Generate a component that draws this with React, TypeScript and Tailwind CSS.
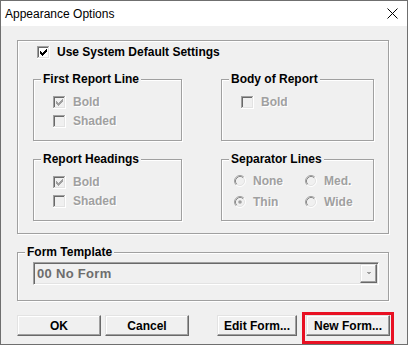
import React from "react";

const CHECK: [number, number, number][] = [
  [9, 3, 1],
  [8, 4, 2],
  [3, 5, 1],
  [7, 5, 3],
  [3, 6, 2],
  [6, 6, 3],
  [3, 7, 5],
  [4, 8, 3],
  [5, 9, 1],
];

function CheckBox({ checked, disabled }: { checked?: boolean; disabled?: boolean }) {
  const fill = disabled ? "#f0f0f0" : "#ffffff";
  const mark = disabled ? "#a0a0a0" : "#000000";
  return (
    <svg width="13" height="13" viewBox="0 0 13 13" shapeRendering="crispEdges" className="block shrink-0">
      <rect x="0" y="0" width="12" height="1" fill="#a0a0a0" />
      <rect x="0" y="0" width="1" height="12" fill="#a0a0a0" />
      <rect x="1" y="1" width="10" height="1" fill="#696969" />
      <rect x="1" y="1" width="1" height="10" fill="#696969" />
      <rect x="1" y="11" width="11" height="1" fill="#e3e3e3" />
      <rect x="11" y="1" width="1" height="11" fill="#e3e3e3" />
      <rect x="0" y="12" width="13" height="1" fill="#ffffff" />
      <rect x="12" y="0" width="1" height="13" fill="#ffffff" />
      <rect x="2" y="2" width="9" height="9" fill={fill} />
      {checked &&
        CHECK.map(([x, y, w], i) => <rect key={i} x={x} y={y} width={w} height={1} fill={mark} />)}
    </svg>
  );
}

function Radio({ checked }: { checked?: boolean }) {
  const o = 3.89;
  const i = 3.18;
  return (
    <svg width="12" height="12" viewBox="0 0 12 12" className="block shrink-0">
      <circle cx="6" cy="6" r="4.5" fill="#f0f0f0" />
      <path d={`M ${6 - o} ${6 + o} A 5.5 5.5 0 0 1 ${6 + o} ${6 - o}`} stroke="#a0a0a0" strokeWidth="1" fill="none" />
      <path d={`M ${6 + o} ${6 - o} A 5.5 5.5 0 0 1 ${6 - o} ${6 + o}`} stroke="#ffffff" strokeWidth="1" fill="none" />
      <path d={`M ${6 - i} ${6 + i} A 4.5 4.5 0 0 1 ${6 + i} ${6 - i}`} stroke="#8a8a8a" strokeWidth="1" fill="none" />
      <path d={`M ${6 + i} ${6 - i} A 4.5 4.5 0 0 1 ${6 - i} ${6 + i}`} stroke="#e3e3e3" strokeWidth="1" fill="none" />
      {checked && <circle cx="6" cy="6" r="1.8" fill="#a0a0a0" />}
    </svg>
  );
}

function Group({
  label,
  className,
  children,
}: {
  label: string;
  className: string;
  children?: React.ReactNode;
}) {
  return (
    <div
      className={
        "relative border border-[#a0a0a0] shadow-[1px_1px_0_#ffffff,inset_1px_1px_0_#ffffff] " + className
      }
    >
      <span className="absolute left-[7px] -top-[8px] px-[2px] bg-[#f0f0f0] leading-[14px] font-bold text-[12px] text-black whitespace-nowrap">
        {label}
      </span>
      {children}
    </div>
  );
}

const dis = "text-[#a0a0a0] [text-shadow:1px_1px_0_#ffffff] font-bold text-[12px] leading-[13px]";

function CheckRow({ label, checked }: { label: string; checked?: boolean }) {
  return (
    <div className="flex items-center h-[13px]">
      <CheckBox checked={checked} disabled />
      <span className={"ml-[7px] " + dis}>{label}</span>
    </div>
  );
}

function RadioRow({ label, checked }: { label: string; checked?: boolean }) {
  return (
    <div className="flex items-center h-[12px]">
      <Radio checked={checked} />
      <span className={"ml-[7px] " + dis}>{label}</span>
    </div>
  );
}

function Btn({ label, w, children }: { label: string; w: string; children?: React.ReactNode }) {
  return (
    <div
      className={
        "relative h-[21px] bg-[#f0f0f0] border border-t-[#e3e3e3] border-l-[#e3e3e3] border-r-[#696969] border-b-[#696969] shadow-[inset_-1px_-1px_0_#a0a0a0,inset_1px_1px_0_#ffffff] flex items-center justify-center font-bold text-[12px] text-black leading-none " +
        w
      }
    >
      {label}
      {children}
    </div>
  );
}

export default function App() {
  return (
    <div className="w-[408px] h-[345px] bg-[#f0f0f0] border border-[#6f6f6f] font-['Liberation_Sans',Arial,sans-serif] text-black flex flex-col">
      <div className="h-[25px] bg-white flex items-center justify-between pl-[4px] pr-[9px] shrink-0">
        <span className="text-[12px] leading-none">Appearance Options</span>
        <svg width="11" height="11" viewBox="0 0 11 11" className="block">
          <path d="M0.5 0.5 L10.5 10.5 M10.5 0.5 L0.5 10.5" stroke="#000" strokeWidth="1" />
        </svg>
      </div>

      <div className="ml-[16px] mt-[14px] w-[372px] h-[194px] relative border border-[#a0a0a0] shadow-[1px_1px_0_#ffffff,inset_1px_1px_0_#ffffff] pt-[5px] pl-[15px] shrink-0">
        <div className="flex items-center h-[13px] ml-[4px]">
          <CheckBox checked />
          <span className="ml-[7px] font-bold text-[12px] leading-[13px] text-black">
            Use System Default Settings
          </span>
        </div>
        <div className="mt-[20px] grid grid-cols-[149px_153px] gap-x-[39px] gap-y-[18px]">
          <Group label="First Report Line" className="h-[62px] pt-[16px] pl-[19px]">
            <div className="flex flex-col gap-[6px]">
              <CheckRow label="Bold" checked />
              <CheckRow label="Shaded" />
            </div>
          </Group>
          <Group label="Body of Report" className="h-[62px] pt-[16px] pl-[19px]">
            <CheckRow label="Bold" />
          </Group>
          <Group label="Report Headings" className="h-[62px] pt-[16px] pl-[19px]">
            <div className="flex flex-col gap-[6px]">
              <CheckRow label="Bold" checked />
              <CheckRow label="Shaded" />
            </div>
          </Group>
          <Group label="Separator Lines" className="h-[62px] pt-[15px] pl-[12px]">
            <div className="grid grid-cols-[71px_auto] gap-y-[9px]">
              <RadioRow label="None" />
              <RadioRow label="Med." />
              <RadioRow label="Thin" checked />
              <RadioRow label="Wide" />
            </div>
          </Group>
        </div>
      </div>

      <Group label="Form Template" className="ml-[16px] mt-[18px] w-[372px] h-[49px] pt-[9px] pl-[15px] shrink-0">
        <div className="w-[346px] h-[23px] flex items-center justify-between border border-t-[#a0a0a0] border-l-[#a0a0a0] border-b-white border-r-white shadow-[inset_1px_1px_0_#696969,inset_-1px_-1px_0_#e3e3e3] bg-[#f0f0f0] pl-[3px] pr-[1px]">
          <span className="font-bold text-[13px] tracking-[0.3px] text-[#6d6d6d] leading-none">00 No Form</span>
          <div className="w-[17px] h-[19px] bg-[#f0f0f0] border border-t-[#e3e3e3] border-l-[#e3e3e3] border-r-[#696969] border-b-[#696969] shadow-[inset_-1px_-1px_0_#a0a0a0,inset_1px_1px_0_#ffffff] flex items-center justify-center">
            <svg width="7" height="5" viewBox="0 0 7 5" shapeRendering="crispEdges" className="block">
              <polygon points="1,1 6,1 3.5,3.5" fill="#a0a0a0" />
            </svg>
          </div>
        </div>
      </Group>

      <div className="ml-[16px] mt-[14px] flex shrink-0">
        <Btn label="OK" w="w-[84px]" />
        <div className="ml-[4px]">
          <Btn label="Cancel" w="w-[84px]" />
        </div>
        <div className="ml-[28px]">
          <Btn label="Edit Form..." w="w-[80px]" />
        </div>
        <div className="ml-[9px]">
          <Btn label="New Form..." w="w-[84px]">
            <span className="absolute -left-[5px] -top-[4px] w-[92px] h-[32px] border-[3px] border-[#e81123] pointer-events-none" />
          </Btn>
        </div>
      </div>
    </div>
  );
}
